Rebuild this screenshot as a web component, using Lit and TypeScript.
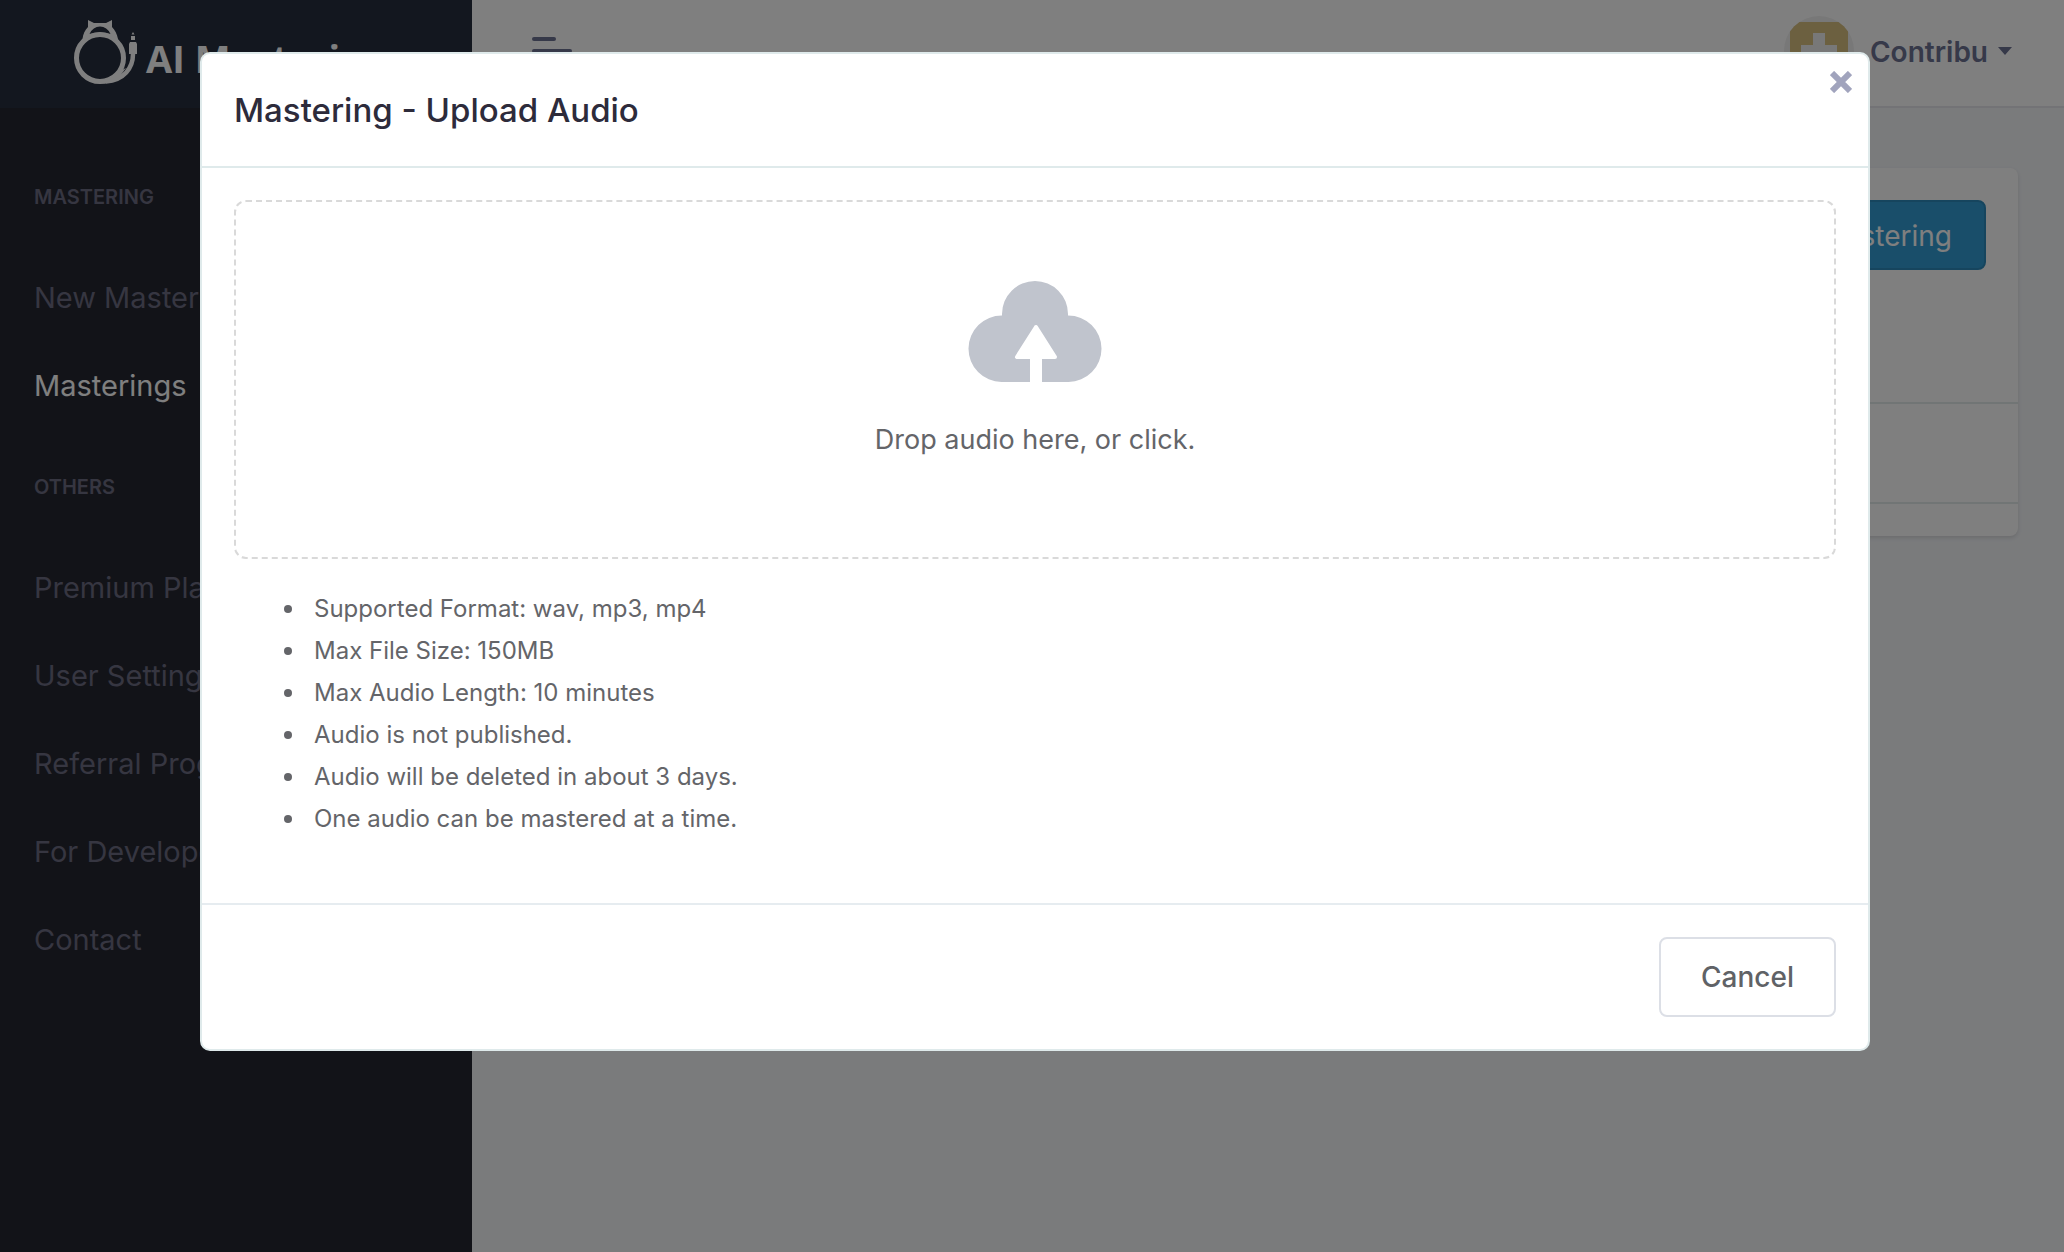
import { LitElement, html, css } from "lit";
import { customElement } from "lit/decorators.js";
import { classMap } from "lit/directives/class-map.js";

interface NavItem {
  label: string;
  href: string;
  active?: boolean;
}

interface NavSection {
  title: string;
  items: NavItem[];
}

const SECTIONS: NavSection[] = [
  {
    title: "Mastering",
    items: [
      { label: "New Mastering", href: "#new" },
      { label: "Masterings", href: "#masterings", active: true },
    ],
  },
  {
    title: "Others",
    items: [
      { label: "Premium Plan", href: "#premium" },
      { label: "User Settings", href: "#settings" },
      { label: "Referral Program", href: "#referral" },
      { label: "For Developers", href: "#developers" },
      { label: "Contact", href: "#contact" },
    ],
  },
];

const NOTES = [
  "Supported Format: wav, mp3, mp4",
  "Max File Size: 150MB",
  "Max Audio Length: 10 minutes",
  "Audio is not published.",
  "Audio will be deleted in about 3 days.",
  "One audio can be mastered at a time.",
];

@customElement("app-sidebar")
export class AppSidebar extends LitElement {
  static styles = css`
    :host {
      display: flex;
      flex-direction: column;
      background: #252731;
    }
    .brand {
      display: flex;
      align-items: center;
      gap: 8px;
      height: 108px;
      box-sizing: border-box;
      padding: 0 72px 4px;
      background: #262e3e;
      color: #fff;
      text-decoration: none;
      white-space: nowrap;
      overflow: hidden;
    }
    .mark {
      flex: none;
      width: 66px;
      height: 70px;
    }
    .name {
      font: 700 38px/48px "Open Sans", "Noto Sans", sans-serif;
      padding-top: 12px;
    }
    .menu {
      padding-top: 32px;
    }
    .heading {
      margin: 0;
      padding: 0 34px;
      font-size: 20px;
      font-weight: 600;
      line-height: 114px;
      text-transform: uppercase;
      color: #6c6c82;
    }
    .list {
      list-style: none;
      margin: 0;
      padding: 0;
    }
    .link {
      display: block;
      padding: 0 34px;
      font-size: 29px;
      line-height: 88px;
      color: #6c6c82;
      text-decoration: none;
      white-space: nowrap;
    }
    .link.active {
      color: #fff;
    }
  `;

  render() {
    return html`
      <a class="brand" href="#home">
        <svg class="mark" viewBox="72 17 66 70" fill="none" stroke="#fff" aria-hidden="true">
          <path
            d="M88 20 L94 23 H106 L112 20 V27 C115 30 117 34 118 39 L112 42 L88 42 L82.500 39 C83 34 85 30 88 27 Z"
            fill="#fff"
            stroke="none"
          />
          <path d="M89.500 34 Q93 26.500 100 26.500 T110.500 34 Q100 31 89.500 34Z" fill="#262e3e" stroke="none" />
          <ellipse cx="100" cy="58" rx="23.500" ry="23.500" fill="#262e3e" stroke-width="5" />
          <path d="M133 54 C133 68 124 80 106 81.500" stroke-width="4.500" />
          <path d="M118 72 L126 68 L117 80 L104 83Z" fill="#fff" stroke="none" />
          <path d="M130 42 h6 l1 2 v10 h-8 v-10Z M131 36 h4 v4 h-4Z M131.500 34.500 L133 32 L134.500 34.500Z" fill="#fff" stroke="none" />
        </svg>
        <span class="name">AI Mastering</span>
      </a>
      <nav class="menu">
        ${SECTIONS.map(
          (section) => html`
            <h2 class="heading">${section.title}</h2>
            <ul class="list">
              ${section.items.map(
                (item) => html`
                  <li>
                    <a class=${classMap({ link: true, active: !!item.active })} href=${item.href}>${item.label}</a>
                  </li>
                `
              )}
            </ul>
          `
        )}
      </nav>
    `;
  }
}

@customElement("app-topbar")
export class AppTopbar extends LitElement {
  static styles = css`
    :host {
      display: flex;
      align-items: center;
      justify-content: space-between;
      box-sizing: border-box;
      height: 108px;
      padding: 0 52px 4px 60px;
      background: #fff;
      border-bottom: 2px solid #e6e7ec;
    }
    button {
      font: inherit;
      border: 0;
      padding: 0;
      background: none;
      color: inherit;
      cursor: pointer;
    }
    .toggle {
      display: flex;
      flex-direction: column;
      gap: 8px;
    }
    .bar {
      width: 40px;
      height: 4px;
      border-radius: 2px;
      background: #6c7293;
    }
    .bar.short {
      width: 24px;
    }
    .user {
      display: flex;
      align-items: center;
      gap: 10px;
      color: #6c7293;
      font-size: 28px;
      font-weight: 600;
    }
    .label {
      padding-top: 2px;
    }
    .avatar {
      width: 70px;
      height: 70px;
      margin-right: 6px;
      border-radius: 50%;
    }
    .caret {
      width: 14px;
      height: 8px;
    }
  `;

  render() {
    return html`
      <button class="toggle" type="button" aria-label="Toggle menu">
        <span class="bar short"></span>
        <span class="bar"></span>
        <span class="bar short"></span>
      </button>
      <button class="user" type="button">
        <svg class="avatar" viewBox="0 0 70 70" aria-hidden="true">
          <rect width="70" height="70" fill="#f0f0f0" />
          <rect x="6" y="6" width="58" height="58" fill="#d8c080" />
          <path d="M29 17h12v12h12v12H41v12H29V41H17V29h12Z" fill="#f0f0f0" />
        </svg>
        <span class="label">Contribu</span>
        <svg class="caret" viewBox="0 0 14 8" aria-hidden="true"><path d="M0 0h14L7 8Z" fill="#6c7293" /></svg>
      </button>
    `;
  }
}

@customElement("upload-dialog")
export class UploadDialog extends LitElement {
  static styles = css`
    :host {
      display: block;
    }
    .dialog {
      position: relative;
      background: #fff;
      border: 2px solid #dfeaeb;
      border-radius: 10px;
      color: #646569;
    }
    .head {
      display: flex;
      align-items: center;
      min-height: 112px;
      padding: 0 32px;
      border-bottom: 2px solid #dfeaeb;
    }
    .title {
      margin: 0;
      font-size: 33px;
      line-height: 48px;
      font-weight: 500;
      color: #2d2b3b;
    }
    .close {
      position: absolute;
      top: 11px;
      right: 10px;
      width: 34px;
      height: 34px;
      padding: 6px;
      border: 0;
      background: none;
      cursor: pointer;
    }
    .cross {
      display: block;
      width: 22px;
      height: 22px;
    }
    .body {
      padding: 32px 32px 63px;
    }
    .drop {
      display: flex;
      flex-direction: column;
      align-items: center;
      gap: 36px;
      height: 359px;
      box-sizing: border-box;
      padding-top: 79px;
      border: 2px dashed #d9d9d9;
      border-radius: 12px;
      font-size: 27px;
      line-height: 44px;
      cursor: pointer;
    }
    .file {
      position: absolute;
      width: 1px;
      height: 1px;
      opacity: 0;
    }
    .cloud {
      width: 134px;
      height: 101px;
    }
    .notes {
      list-style: none;
      margin: 29px 0 0;
      padding-left: 50px;
      font-size: 24px;
      line-height: 42px;
    }
    .note {
      display: flex;
      align-items: center;
      gap: 22px;
    }
    .note::before {
      content: "";
      width: 8px;
      height: 8px;
      border-radius: 50%;
      background: currentColor;
    }
    .foot {
      display: flex;
      justify-content: flex-end;
      padding: 32px;
      border-top: 2px solid #e6ecf0;
    }
    .cancel {
      height: 80px;
      padding: 0 40px;
      border: 2px solid #dcdfe6;
      border-radius: 8px;
      background: #fff;
      color: #606266;
      font: inherit;
      font-size: 28px;
      font-weight: 500;
      cursor: pointer;
    }
  `;

  render() {
    return html`
      <section class="dialog" role="dialog" aria-modal="true" aria-labelledby="title">
        <header class="head">
          <h1 class="title" id="title">Mastering - Upload Audio</h1>
          <button class="close" type="button" aria-label="Close">
            <svg class="cross" viewBox="0 0 22 22" aria-hidden="true">
              <path d="M2 2L20 20M20 2L2 20" stroke="#a1a4bd" stroke-width="6" />
            </svg>
          </button>
        </header>
        <div class="body">
          <label class="drop">
            <input class="file" type="file" accept="audio/*,video/mp4" />
            <svg class="cloud" viewBox="0 0 134 101" aria-hidden="true">
              <path
                d="M34 34V33A33 33 0 0 1 100 33V34.500A33.250 33.250 0 0 1 100.500 101H33.500A33.250 33.250 0 0 1 34 34.500Z"
                fill="#c0c4cd"
              />
              <path d="M68 46L49 76H87Z" fill="#fff" stroke="#fff" stroke-width="4" stroke-linejoin="round" />
              <path d="M62 76h12v25H62Z" fill="#fff" />
            </svg>
            <span>Drop audio here, or click.</span>
          </label>
          <ul class="notes">
            ${NOTES.map((note) => html`<li class="note">${note}</li>`)}
          </ul>
        </div>
        <footer class="foot">
          <button class="cancel" type="button">Cancel</button>
        </footer>
      </section>
    `;
  }
}

@customElement("app-root")
export class AppRoot extends LitElement {
  static styles = css`
    :host {
      display: block;
      position: relative;
      font-family: Inter, "Liberation Sans", sans-serif;
    }
    .shell {
      display: grid;
      grid-template-columns: 472px minmax(0, 1fr);
      min-height: 100vh;
    }
    .main {
      background: #f4f6f9;
    }
    .content {
      padding: 60px 46px;
    }
    .card {
      background: #fff;
      border-radius: 8px;
      box-shadow: 0 2px 4px rgba(0, 0, 0, 0.12);
    }
    .tools {
      display: flex;
      justify-content: flex-end;
      padding: 32px 32px 132px;
    }
    .create {
      height: 70px;
      padding: 2px 32px 0;
      border: 2px solid #2c8bbd;
      border-radius: 8px;
      background: #329dd5;
      color: #fff;
      font: inherit;
      font-size: 28px;
      cursor: pointer;
    }
    .row {
      height: 98px;
      border-top: 2px solid #e2ebeb;
      border-bottom: 2px solid #e2ebeb;
    }
    .end {
      height: 32px;
    }
    .overlay {
      position: absolute;
      inset: 0;
      padding: 52px 194px 0 200px;
      background: rgba(0, 0, 0, 0.5);
    }
  `;

  render() {
    return html`
      <div class="shell">
        <app-sidebar></app-sidebar>
        <div class="main">
          <app-topbar></app-topbar>
          <main class="content">
            <div class="card">
              <div class="tools">
                <button class="create" type="button">New Mastering</button>
              </div>
              <div class="row"></div>
              <div class="end"></div>
            </div>
          </main>
        </div>
      </div>
      <div class="overlay">
        <upload-dialog></upload-dialog>
      </div>
    `;
  }
}
